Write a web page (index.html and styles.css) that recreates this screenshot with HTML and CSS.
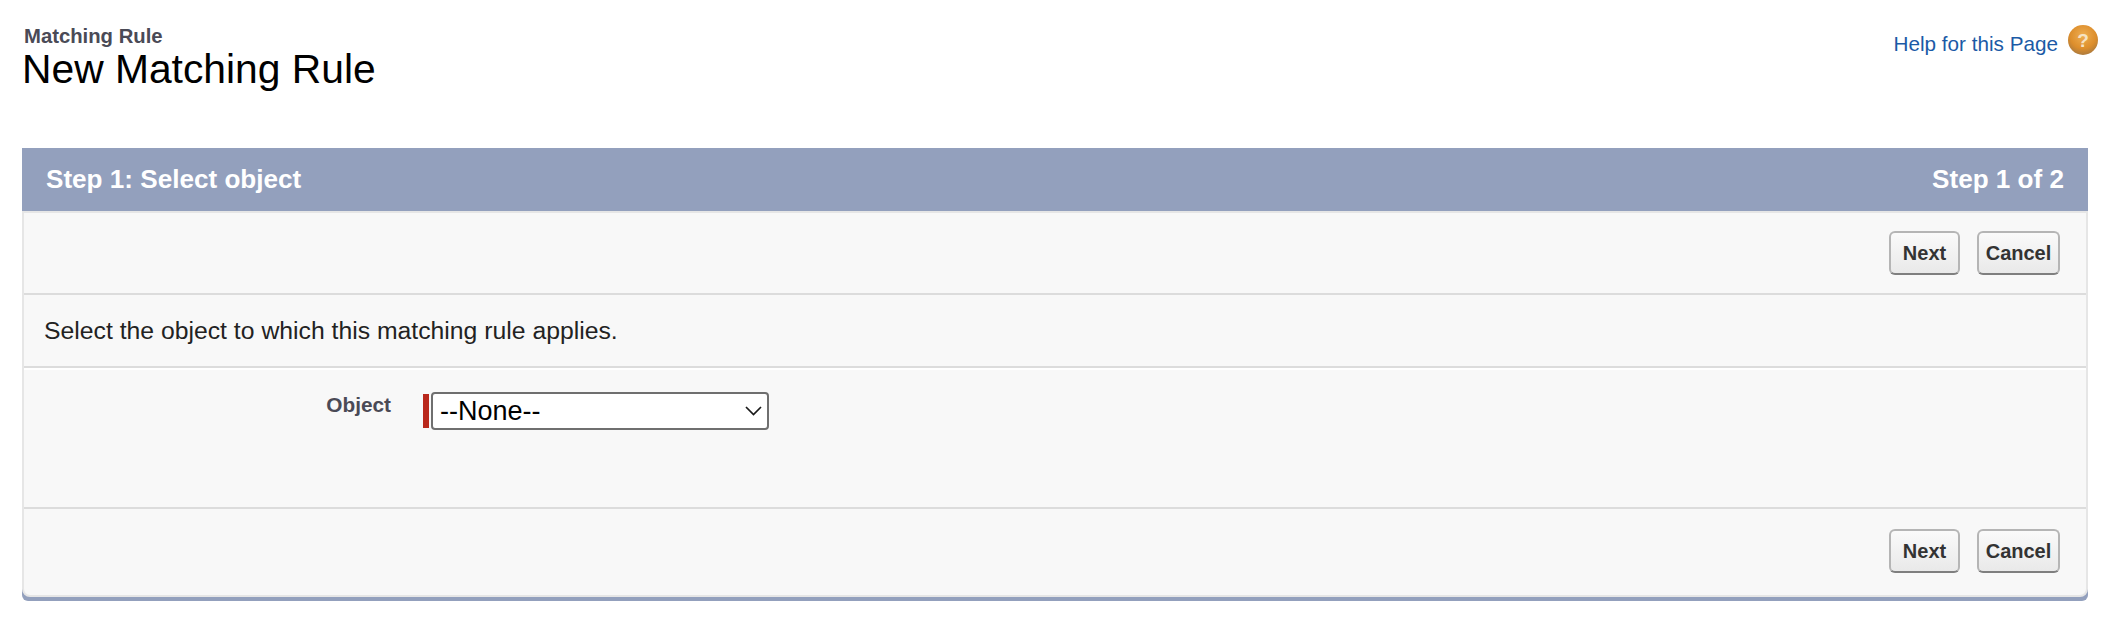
FILE: index.html
```html
<!DOCTYPE html>
<html lang="en">
<head>
    <meta charset="UTF-8">
    <title>New Matching Rule</title>
    <link rel="stylesheet" href="styles.css">
</head>
<body>
<div class="page-header">
    <div class="page-titles">
        <div class="page-type">Matching Rule</div>
        <h1>New Matching Rule</h1>
    </div>
    <a class="help-link" href="#">
        <span class="help-text">Help for this Page</span>
        <svg class="help-icon" width="30" height="30" viewBox="0 0 30 30">
            <defs>
                <radialGradient id="helpOrange" cx="50%" cy="35%" r="66%">
                    <stop offset="0" stop-color="#eeae52"/>
                    <stop offset="0.65" stop-color="#dd8e2c"/>
                    <stop offset="1" stop-color="#ab7a3e"/>
                </radialGradient>
            </defs>
            <circle cx="15" cy="15" r="15" fill="url(#helpOrange)"/>
            <text x="15" y="22" text-anchor="middle" class="help-mark">?</text>
        </svg>
    </a>
</div>
<div class="panel">
    <div class="panel-title">
        <h2>Step 1: Select object</h2>
        <div class="step-count">Step 1 of 2</div>
    </div>
    <div class="panel-body">
        <div class="button-row top-buttons">
            <button class="btn btn-next">Next</button>
            <button class="btn btn-cancel">Cancel</button>
        </div>
        <div class="instructions">Select the object to which this matching rule applies.</div>
        <div class="form-row">
            <label class="field-label" for="objectSelect">Object</label>
            <div class="required-input">
                <select id="objectSelect">
                    <option>--None--</option>
                </select>
                <svg class="select-arrow" width="17" height="10" viewBox="0 0 17 10">
                    <path d="M1 1 L8.5 8.5 L16 1" fill="none" stroke="#1a1a1a" stroke-width="1.7"/>
                </svg>
            </div>
        </div>
        <div class="button-row bottom-buttons">
            <button class="btn btn-next">Next</button>
            <button class="btn btn-cancel">Cancel</button>
        </div>
    </div>
</div>
</body>
</html>
```
FILE: styles.css
```css
body {
    margin: 0;
    background: #fff;
    font-family: "Liberation Sans", Arial, sans-serif;
    color: #222;
}

.page-header {
    display: flex;
    justify-content: space-between;
    align-items: flex-start;
    height: 148px;
    padding: 0 14px 0 22px;
    box-sizing: border-box;
}

.page-titles {
    padding-top: 25px;
}

.page-type {
    font-size: 20.3px;
    line-height: 22px;
    font-weight: bold;
    color: #4a4a56;
    padding-left: 2px;
}

h1 {
    margin: 0;
    font-size: 40.8px;
    line-height: 45px;
    font-weight: normal;
    color: #000;
}

.help-link {
    display: flex;
    align-items: center;
    gap: 10px;
    margin-top: 24px;
    font-size: 20.7px;
    color: #1b5aa6;
    text-decoration: none;
}

.help-text {
    margin-top: 8px;
}

.help-icon {
    display: block;
}

.help-mark {
    font-family: "Liberation Sans", Arial, sans-serif;
    font-size: 19px;
    font-weight: bold;
    fill: #f6e3c4;
}

.panel {
    margin: 0 24px 0 22px;
    background: #93a0bd;
    border-radius: 0 0 6px 6px;
    padding-bottom: 4px;
}

.panel-title {
    display: flex;
    justify-content: space-between;
    align-items: center;
    height: 63px;
    padding: 0 24px;
}

h2 {
    margin: 0;
    font-size: 26.1px;
    font-weight: bold;
    color: #fff;
}

.step-count {
    font-size: 26.1px;
    font-weight: bold;
    color: #fff;
}

.panel-body {
    background: #f8f8f8;
    border: 2px solid #e6e6e6;
    border-radius: 0 0 8px 8px;
}

.button-row {
    display: flex;
    justify-content: flex-end;
    gap: 17px;
    padding-right: 26px;
}

.top-buttons {
    height: 82px;
    padding-top: 18px;
    box-sizing: border-box;
    border-bottom: 2px solid #dcdcdc;
}

.bottom-buttons {
    height: 86px;
    padding-top: 20px;
    box-sizing: border-box;
}

.btn {
    height: 44px;
    box-sizing: border-box;
    padding: 0;
    border: 2px solid #b5b5b5;
    border-bottom-color: #7f7f7f;
    border-radius: 6px;
    background: linear-gradient(#fafafa, #e9e9e9);
    font-family: "Liberation Sans", Arial, sans-serif;
    font-size: 20px;
    font-weight: bold;
    color: #333;
}

.btn-next {
    width: 71px;
}

.btn-cancel {
    width: 83px;
}

.instructions {
    height: 71px;
    line-height: 72px;
    padding-left: 20px;
    font-size: 24.75px;
    color: #222;
    border-bottom: 2px solid #dcdcdc;
}

.form-row {
    display: flex;
    height: 141px;
    box-sizing: border-box;
    padding-top: 24px;
    border-top: 2px solid #fff;
    border-bottom: 2px solid #dcdcdc;
}

.field-label {
    width: 367px;
    text-align: right;
    font-size: 20.8px;
    line-height: 22px;
    font-weight: bold;
    color: #4a4a56;
}

.required-input {
    position: relative;
    margin-left: 32px;
    height: 34px;
    padding-left: 2px;
    border-left: 6px solid #b9281c;
}

select {
    display: block;
    appearance: none;
    width: 338px;
    height: 38px;
    margin-top: -2px;
    padding: 0 0 0 7px;
    box-sizing: border-box;
    border: 2px solid #6f6f6f;
    border-radius: 4px;
    background: #fff;
    font-family: "Liberation Sans", Arial, sans-serif;
    font-size: 27px;
    color: #000;
}

.select-arrow {
    position: absolute;
    right: 7px;
    top: 12px;
    pointer-events: none;
}
```
